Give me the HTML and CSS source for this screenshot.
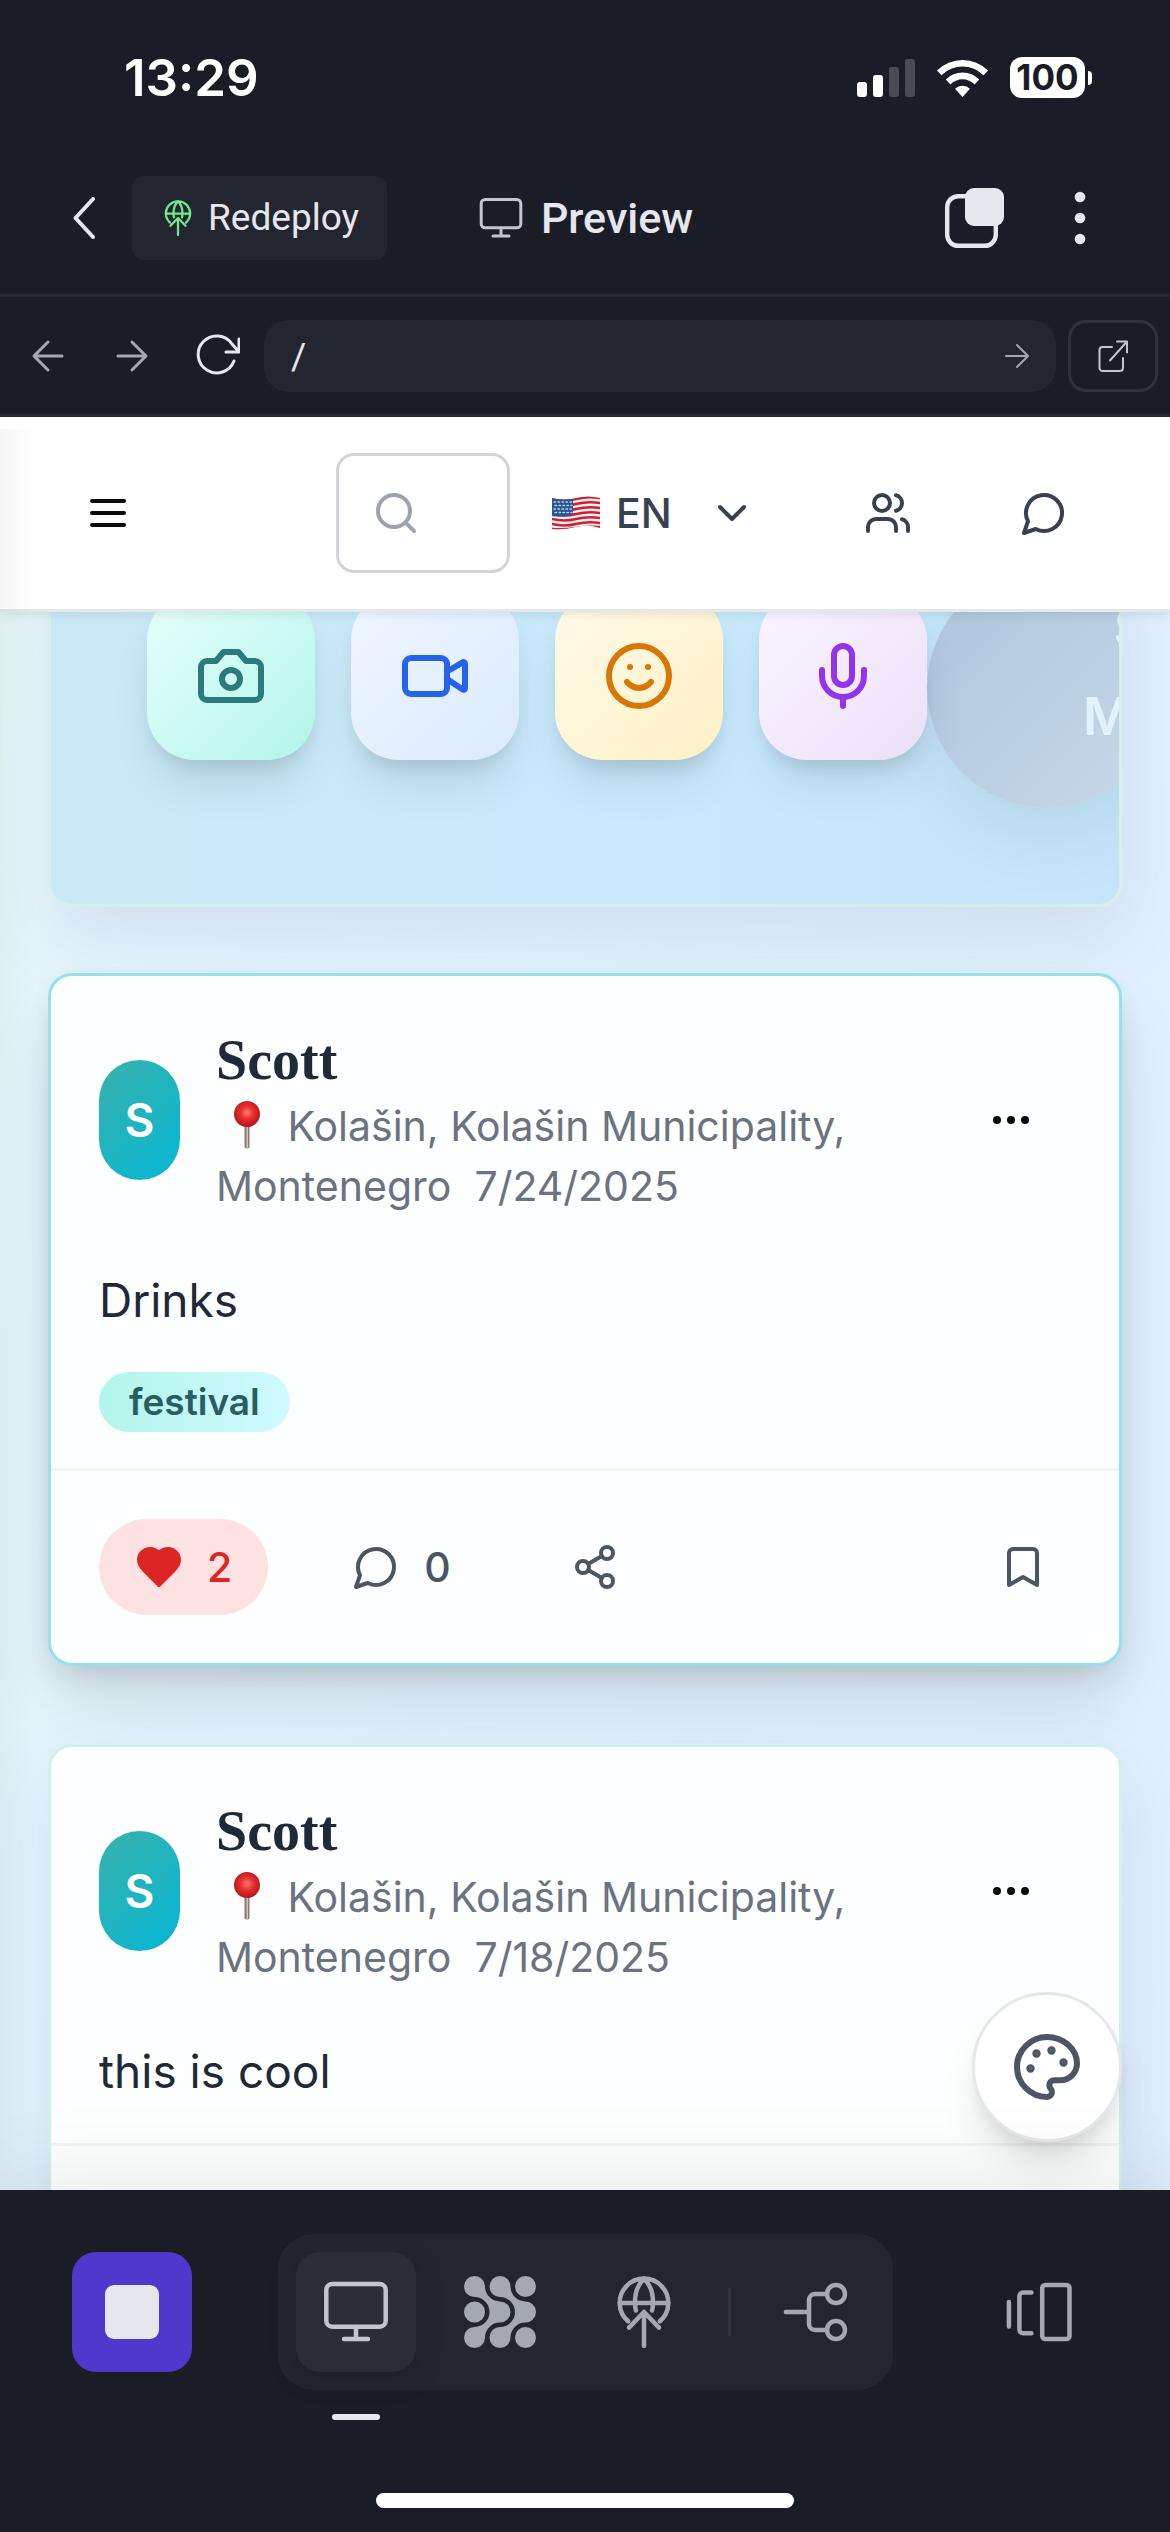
FILE: index.html
```html
<!DOCTYPE html>
<html lang="en">
<head>
<meta charset="utf-8">
<meta name="viewport" content="width=device-width, initial-scale=1">
<title>Preview</title>
<link rel="stylesheet" href="styles.css">
</head>
<body>
<svg class="sprite" aria-hidden="true">
  <symbol id="i-monitor" viewBox="0 0 24 24"><rect x="2.1" y="2.7" width="19.8" height="14.2" rx="2"/><path d="M12 17v4M8 21h8"/></symbol>
  <symbol id="i-deploy" viewBox="0 0 24 24"><path d="M6.7 15.1A8.1 8.1 0 1 1 17.3 15.1M3.8 9h16.4M12 .9C10 2.800 9 6 9 8.800c0 1 .1 1.900.3 2.700M12 .9c2 1.900 3 5.100 3 7.900 0 1-.1 1.900-.3 2.700"/><path d="M7 17.200l5-5.200 5 5.200M12 12v11.300" stroke-linecap="round"/></symbol>
  <symbol id="i-message" viewBox="0 0 24 24"><path d="M7.900 20A9 9 0 1 0 4 16.100L2 22Z"/></symbol>
  <symbol id="i-dots" viewBox="0 0 24 24"><circle cx="12" cy="12" r="1"/><circle cx="19" cy="12" r="1"/><circle cx="5" cy="12" r="1"/></symbol>
  <symbol id="i-pin" viewBox="0 0 57 48"><defs><radialGradient id="ball" cx=".5" cy=".45" r=".55"><stop offset="0" stop-color="#ff7a70"/><stop offset=".45" stop-color="#e8302f"/><stop offset="1" stop-color="#b5151b"/></radialGradient></defs><path d="M27 24h5v22.500q-2.500 2-5 0z" fill="#8d7b73"/><path d="M29 24h1.500v23H29z" fill="#cfc3bc"/><circle cx="29.500" cy="13" r="13" fill="url(#ball)"/></symbol>
</svg>

<header class="status">
  <time class="clock">13:29</time>
  <div class="status-icons">
    <svg width="58" height="38" viewBox="0 0 58 38" aria-label="Signal"><g fill="#fff"><rect y="23" width="10" height="15" rx="3"/><rect x="16" y="16" width="10" height="22" rx="3"/></g><g fill="#484a54"><rect x="32" y="8" width="10" height="30" rx="3"/><rect x="48" width="10" height="38" rx="3"/></g></svg>
    <svg width="51" height="38" viewBox="0 0 51 38" aria-label="Wi-Fi"><path d="M0 11.500A36 36 0 0 1 51 11.500L46.500 16.200A29.800 29.800 0 0 0 4.500 16.200ZM8.800 20.500A23.500 23.500 0 0 1 42.200 20.500L37.600 25.400A17 17 0 0 0 13.400 25.400ZM18 29.800A10.700 10.700 0 0 1 33 29.800L25.500 38Z"/></svg>
    <div class="battery"><span class="battery-level">100</span><span class="battery-cap"></span></div>
  </div>
</header>

<nav class="topbar">
  <div class="topbar-left">
    <button class="back" aria-label="Back"><svg width="22" height="42" viewBox="0 0 22 42"><path d="M20 2L2.500 21L20 40"/></svg></button>
    <button class="redeploy"><svg class="icon-36"><use href="#i-deploy"/></svg>Redeploy</button>
  </div>
  <h1 class="title"><svg class="icon-48 thin"><use href="#i-monitor"/></svg>Preview</h1>
  <div class="topbar-right">
    <button class="bare" aria-label="Windows"><svg width="60" height="60" viewBox="0 0 60 60"><rect x="2.200" y="8.200" width="48.600" height="49.600" rx="11" stroke="#e6e7ed" stroke-width="4.400"/><rect x="20" y="0" width="39" height="38" rx="9" fill="#e6e7ed"/></svg></button>
    <button class="bare" aria-label="More"><svg width="60" height="60" viewBox="0 0 60 60"><g fill="#e6e7ed"><circle cx="30" cy="9" r="5.300"/><circle cx="30" cy="30" r="5.300"/><circle cx="30" cy="51" r="5.300"/></g></svg></button>
  </div>
</nav>

<form class="addressbar">
  <div class="nav-buttons">
    <button type="button" class="nav-btn muted" aria-label="Go back"><svg width="36" height="36" viewBox="0 0 36 36"><path d="M32 18H5M18 4L4 18L18 32"/></svg></button>
    <button type="button" class="nav-btn muted" aria-label="Go forward"><svg width="36" height="36" viewBox="0 0 36 36"><path d="M4 18h27M18 4L32 18L18 32"/></svg></button>
    <button type="button" class="nav-btn" aria-label="Reload"><svg width="48" height="48" viewBox="0 0 48 48"><path d="M47 20H34M47 20V7M47 20L40 12A18.500 18.500 0 1 0 42 29"/></svg></button>
  </div>
  <div class="address">
    <input class="address-input" type="text" value="/" aria-label="Address">
    <button class="go" aria-label="Go"><svg width="24" height="26" viewBox="0 0 24 26"><path d="M1 13h21M12 2L23 13L12 24"/></svg></button>
  </div>
  <button type="button" class="open" aria-label="Open in new tab"><svg width="30" height="32" viewBox="0 0 30 32"><path d="M14 7H4.500A3 3 0 0 0 1.500 10V28A3 3 0 0 0 4.500 31H22A3 3 0 0 0 25 28V18M12 20.500L29 1.500M19 1.500H29V12.500"/></svg></button>
</form>

<main class="app">
  <header class="app-header">
    <button class="icon-btn menu" aria-label="Menu"><svg class="icon-48" viewBox="0 0 24 24"><path d="M4 6h16M4 12h16M4 18h16"/></svg></button>
    <label class="search">
      <svg class="icon-48" viewBox="0 0 24 24"><circle cx="11" cy="11" r="8"/><path d="m21 21-4.300-4.300"/></svg>
      <input class="search-input" type="text" aria-label="Search">
    </label>
    <label class="language">
      <svg width="48" height="34" viewBox="0 0 48 34" aria-hidden="true">
        <defs><clipPath id="wave"><path d="M0 2Q12 5 24 2T48 2V32Q36 28 24 31T0 33Z"/></clipPath></defs>
        <g clip-path="url(#wave)"><rect width="48" height="34" fill="#f4f1f2"/>
          <g fill="none" stroke="#d0202f" stroke-width="2.500"><path d="M0 3Q12 6 24 3T48 2M0 8Q12 11 24 8T48 7M0 13Q12 16 24 13T48 12M0 18Q12 21 24 18T48 17M0 23Q12 26 24 23T48 22M0 28Q12 31 24 28T48 27M0 33Q12 34 24 32T48 31"/></g>
          <path d="M0 0h21v19Q10 22 0 20z" fill="#2a5591"/>
          <g fill="none" stroke="#b9cbe6" stroke-width="1.500" stroke-dasharray="1.500 2.500"><path d="M2 6h18M3 9.500h17M2 13h18M3 16.500h17"/></g></g>
      </svg>
      <select class="language-select" aria-label="Language"><option>EN</option></select>
      <svg class="icon-48 chevron" viewBox="0 0 24 24"><path d="m6 9 6 6 6-6"/></svg>
    </label>
    <button class="icon-btn" aria-label="Friends"><svg class="icon-48" viewBox="0 0 24 24"><path d="M16 21v-2a4 4 0 0 0-4-4H6a4 4 0 0 0-4 4v2"/><circle cx="9" cy="7" r="4"/><path d="M22 21v-2a4 4 0 0 0-3-3.870M16 3.130a4 4 0 0 1 0 7.750"/></svg></button>
    <button class="icon-btn messages" aria-label="Messages"><svg class="icon-48"><use href="#i-message"/></svg></button>
  </header>

  <div class="feed">
    <section class="composer">
      <div class="tiles">
        <button class="tile camera" aria-label="Photo"><svg class="icon-72" viewBox="0 0 24 24"><path d="M14.500 4h-5L7 7H4a2 2 0 0 0-2 2v9a2 2 0 0 0 2 2h16a2 2 0 0 0 2-2V9a2 2 0 0 0-2-2h-3z"/><circle cx="12" cy="13" r="3"/></svg></button>
        <button class="tile video" aria-label="Video"><svg class="icon-72" viewBox="0 0 24 24"><path d="m16 13 5.223 3.482a.5.5 0 0 0 .777-.416V7.870a.5.5 0 0 0-.752-.432L16 10.500"/><rect x="2" y="6" width="14" height="12" rx="2"/></svg></button>
        <button class="tile mood" aria-label="Mood"><svg class="icon-72" viewBox="0 0 24 24"><circle cx="12" cy="12" r="10"/><path d="M8 14s1.500 2 4 2 4-2 4-2M9 9h.01M15 9h.01"/></svg></button>
        <button class="tile voice" aria-label="Voice"><svg class="icon-72" viewBox="0 0 24 24"><path d="M12 2a3 3 0 0 0-3 3v7a3 3 0 0 0 6 0V5a3 3 0 0 0-3-3Z"/><path d="M19 10v2a7 7 0 0 1-14 0v-2M12 19v3"/></svg></button>
      </div>
      <button class="share"><span>Share<br>Moment</span></button>
    </section>

    <article class="post highlighted">
      <header class="post-head">
        <span class="avatar">S</span>
        <div class="byline">
          <h2 class="author">Scott</h2>
          <p class="meta"><svg class="pin"><use href="#i-pin"/></svg> Kolašin, Kolašin Municipality, Montenegro&nbsp; 7/24/2025</p>
        </div>
        <button class="icon-btn options" aria-label="Post options"><svg class="icon-48"><use href="#i-dots"/></svg></button>
      </header>
      <p class="body">Drinks</p>
      <ul class="tags"><li><a class="tag" href="#festival">festival</a></li></ul>
      <footer class="actions">
        <button class="action liked"><svg class="icon-48" viewBox="0 0 24 24"><path d="M19 14c1.490-1.460 3-3.210 3-5.500A5.500 5.500 0 0 0 16.500 3c-1.760 0-3 .5-4.500 2-1.500-1.500-2.740-2-4.500-2A5.500 5.500 0 0 0 2 8.500c0 2.300 1.500 4.050 3 5.500l7 7Z"/></svg>2</button>
        <button class="action"><svg class="icon-48"><use href="#i-message"/></svg>0</button>
        <button class="action" aria-label="Share"><svg class="icon-48" viewBox="0 0 24 24"><circle cx="18" cy="5" r="3"/><circle cx="6" cy="12" r="3"/><circle cx="18" cy="19" r="3"/><path d="m8.590 13.510 6.830 3.980M15.410 6.510l-6.820 3.980"/></svg></button>
        <button class="action save" aria-label="Save"><svg class="icon-48" viewBox="0 0 24 24"><path d="m19 21-7-4-7 4V5a2 2 0 0 1 2-2h10a2 2 0 0 1 2 2v16z"/></svg></button>
      </footer>
    </article>

    <article class="post">
      <header class="post-head">
        <span class="avatar">S</span>
        <div class="byline">
          <h2 class="author">Scott</h2>
          <p class="meta"><svg class="pin"><use href="#i-pin"/></svg> Kolašin, Kolašin Municipality, Montenegro&nbsp; 7/18/2025</p>
        </div>
        <button class="icon-btn options" aria-label="Post options"><svg class="icon-48"><use href="#i-dots"/></svg></button>
      </header>
      <p class="body">this is cool</p>
      <footer class="actions"></footer>
    </article>
  </div>

  <button class="palette" aria-label="Theme"><svg class="icon-72" viewBox="0 0 24 24"><g fill="currentColor" stroke-width="1.800"><circle cx="13.500" cy="6.500" r=".5"/><circle cx="17.500" cy="10.500" r=".5"/><circle cx="8.500" cy="7.500" r=".5"/><circle cx="6.500" cy="12.500" r=".5"/></g><path d="M12 2C6.500 2 2 6.500 2 12s4.500 10 10 10c.926 0 1.648-.746 1.648-1.688 0-.437-.18-.835-.437-1.125-.29-.289-.438-.652-.438-1.125a1.640 1.640 0 0 1 1.668-1.668h1.996c3.051 0 5.555-2.503 5.555-5.554C21.965 6.012 17.461 2 12 2z"/></svg></button>
</main>

<nav class="dock">
  <div class="dock-row">
    <button class="stop" aria-label="Stop"><span class="stop-mark"></span></button>
    <div class="tabs">
      <button class="tab active" aria-label="Preview"><svg class="icon-72 thin"><use href="#i-monitor"/></svg></button>
      <button class="tab" aria-label="Agent"><svg class="icon-72 solid" viewBox="0 0 24 24"><path d="M7 3.500A5 5 0 0 0 12 8.500A3.500 3.500 0 0 1 12 15.500A5 5 0 0 0 7 20.500A3.500 3.500 0 1 1 3.500 17A5 5 0 0 0 3.500 7A3.500 3.500 0 1 1 7 3.500ZM15.500 3.500A5 5 0 0 0 20.500 8.500A3.500 3.500 0 0 1 20.500 15.500A5 5 0 0 0 15.500 20.500A3.500 3.500 0 1 1 12 17A5 5 0 0 0 12 7A3.500 3.500 0 1 1 15.500 3.500Z"/><circle cx="20.500" cy="3.500" r="3.500"/><circle cx="3.500" cy="12" r="3.500"/><circle cx="20.500" cy="20.500" r="3.500"/></svg></button>
      <button class="tab" aria-label="Deploy"><svg class="icon-72 thin"><use href="#i-deploy"/></svg></button>
      <span class="divider"></span>
      <button class="tab" aria-label="Branches"><svg class="icon-72 thin" viewBox="0 0 24 24"><circle cx="19" cy="6" r="3"/><circle cx="19" cy="18" r="3"/><path d="M2.300 12H10M16 6h-4a2 2 0 0 0-2 2v8a2 2 0 0 0 2 2h4"/></svg></button>
    </div>
    <button class="tab" aria-label="Tabs"><svg class="icon-72 thin" viewBox="0 0 24 24"><rect x="13.400" y="3" width="9.100" height="18" rx="1"/><path d="M9.800 5.500H7A1.200 1.200 0 0 0 5.800 6.700V17.900A1.200 1.200 0 0 0 7 19.100H9.800M2.300 8.700V16.800"/></svg></button>
  </div>
  <span class="home-bar"></span>
</nav>
</body>
</html>
```
FILE: styles.css
```css
* { box-sizing: border-box; }

body {
  margin: 0;
  height: 100vh;
  display: flex;
  flex-direction: column;
  overflow: hidden;
  background: #1b1d26;
  color: #e6e7ed;
  font-family: Inter, "Liberation Sans", sans-serif;
}

h1, h2, p, ul { margin: 0; padding: 0; }
ul { list-style: none; }

button, input, select {
  margin: 0;
  padding: 0;
  border: 0;
  background: none;
  color: inherit;
  font: inherit;
}

button {
  display: flex;
  align-items: center;
  justify-content: center;
  flex-shrink: 0;
}

svg {
  display: block;
  flex-shrink: 0;
  fill: none;
  stroke-linecap: round;
  stroke-linejoin: round;
}

.sprite { position: absolute; width: 0; height: 0; }
.icon-36 { width: 36px; height: 36px; stroke: currentColor; stroke-width: 1.5; }
.icon-48 { width: 48px; height: 48px; stroke: currentColor; stroke-width: 2; }
.icon-72 { width: 72px; height: 72px; stroke: currentColor; stroke-width: 2; }
.thin { stroke-width: 1.5; }
.solid { fill: currentColor; stroke: none; }

/* Phone status bar */
.status {
  display: flex;
  align-items: center;
  justify-content: space-between;
  height: 141px;
  padding: 14px 78px 0 124px;
  flex-shrink: 0;
  color: #fff;
}
.clock { font-size: 51px; font-weight: 600; }
.status-icons { display: flex; align-items: center; gap: 22px; }
.status-icons svg { fill: currentColor; }
.battery { display: flex; align-items: center; gap: 3px; }
.battery-level {
  width: 75px;
  height: 41px;
  border-radius: 12px;
  background: #fff;
  color: #1b1d26;
  font-size: 35px;
  font-weight: 700;
  line-height: 41px;
  text-align: center;
}
.battery-cap { width: 4px; height: 14px; border-radius: 0 4px 4px 0; background: #fff; }

/* Workspace bar */
.topbar {
  display: grid;
  grid-template-columns: 1fr auto 1fr;
  align-items: center;
  height: 156px;
  padding: 0 60px;
  flex-shrink: 0;
  border-bottom: 3px solid #272934;
  font-family: Roboto, "Liberation Sans", sans-serif;
}
.topbar-left { display: flex; align-items: center; gap: 24px; }
.back { width: 48px; height: 84px; }
.back svg { stroke: #e6e7ed; stroke-width: 4; }
.redeploy {
  gap: 12px;
  height: 84px;
  padding: 0 28px;
  border-radius: 12px;
  background: #24262f;
  font-size: 37px;
}
.redeploy .icon-36 { color: #6eea8c; }
.title { display: flex; align-items: center; gap: 16px; font-size: 43px; font-weight: 500; }
.title .icon-48 { color: #c2c5ce; }
.topbar-right { display: flex; justify-content: flex-end; gap: 45px; }
.bare { width: 60px; height: 60px; }

/* Address bar */
.addressbar {
  display: flex;
  gap: 12px;
  padding: 23px 12px 22px 6px;
  flex-shrink: 0;
  border-bottom: 3px solid #272934;
  font-family: Roboto, "Liberation Sans", sans-serif;
}
.nav-buttons { display: flex; width: 246px; }
.nav-btn { width: 84px; height: 72px; }
.nav-btn svg, .go svg, .open svg { stroke: currentColor; stroke-width: 3; }
.nav-btn.muted, .go { color: #a3a8b2; }
.address {
  display: flex;
  flex: 1;
  padding: 0 27px;
  border-radius: 24px;
  background: #24262f;
}
.address-input { flex: 1; min-width: 0; height: 72px; font-size: 37px; }
.go { width: 24px; }
.go svg, .open svg { stroke-width: 2; }
.open {
  width: 90px;
  height: 72px;
  border: 3px solid #2f313d;
  border-radius: 18px;
  color: #c2c5ce;
}

/* Previewed app */
.app {
  position: relative;
  display: flex;
  flex-direction: column;
  flex: 1;
  min-height: 0;
  overflow: hidden;
  background: linear-gradient(96deg, #e8fbf6 0%, #e4f5fb 9%, #e0f2fe 60%, #e0effd 100%);
}
.app::before {
  content: "";
  position: absolute;
  inset: 12px auto 0 0;
  width: 36px;
  z-index: 3;
  background: linear-gradient(90deg, rgba(0, 0, 0, 0.035), rgba(0, 0, 0, 0));
  pointer-events: none;
}
.app-header {
  position: relative;
  z-index: 2;
  display: flex;
  align-items: center;
  height: 195px;
  padding: 0 66px 0 48px;
  flex-shrink: 0;
  border-bottom: 3px solid #e5e7eb;
  background: #fff;
  box-shadow: 0 3px 9px rgba(0, 0, 0, 0.08);
  color: #374151;
}
.icon-btn { width: 120px; height: 120px; }
.menu { margin-right: auto; color: #0a0a0a; }
.options { color: #0a0a0a; }
.messages { margin-left: 36px; }
.search {
  display: flex;
  align-items: center;
  width: 174px;
  height: 120px;
  padding: 0 33px;
  border: 3px solid #d1d5db;
  border-radius: 18px;
  color: #9ca3af;
}
.search-input { flex: 1; min-width: 0; height: 60px; color: #374151; font-size: 41px; }
.language {
  display: flex;
  align-items: center;
  width: 204px;
  margin: 0 72px 0 42px;
}
.language-select {
  margin-left: 16px;
  appearance: none;
  font-size: 41px;
  font-weight: 500;
}
.chevron { margin-left: auto; }

.feed {
  flex: 1;
  min-height: 0;
  overflow: hidden;
  padding: 0 48px;
}

.composer {
  display: flex;
  align-items: flex-start;
  margin: -71px 0 66px;
  padding: 24px 96px 96px;
  overflow: hidden;
  border: 3px solid #d5efec;
  border-radius: 24px;
  background: linear-gradient(90deg, #c9e9f6, #c8e9fc 55%, #c5e6fa);
  box-shadow: 0 30px 75px rgba(80, 90, 150, 0.12);
}
.tiles { display: flex; gap: 36px; padding-top: 24px; }
.tile {
  width: 168px;
  height: 168px;
  border-radius: 48px;
  box-shadow: 0 30px 45px -9px rgba(0, 0, 0, 0.1), 0 12px 18px -6px rgba(0, 0, 0, 0.1);
}
.camera { background: linear-gradient(135deg, #e6fffa, #b2f5ea); color: #2c7a7b; }
.video { background: linear-gradient(135deg, #eff6ff, #dbeafe); color: #2563eb; }
.mood { background: linear-gradient(135deg, #fffbeb, #fdf0c4); color: #d97706; }
.voice { position: relative; background: linear-gradient(135deg, #faf5ff, #ebe0f7); color: #9333ea; }
.share {
  justify-content: flex-start;
  width: 240px;
  height: 240px;
  padding: 0 0 30px 156px;
  border-radius: 120px;
  background: linear-gradient(135deg, #abc3db, #c8dae9);
  box-shadow: 0 30px 75px rgba(0, 0, 0, 0.08);
  color: #e3f3fd;
  font-size: 52px;
  font-weight: 600;
  line-height: 88px;
  text-align: center;
}
.tiles { position: relative; z-index: 1; }

.post {
  margin-bottom: 78px;
  border: 3px solid #d5efec;
  border-radius: 24px;
  background: #fdfefe;
  box-shadow: 0 24px 75px rgba(60, 100, 150, 0.12);
  color: #1f2937;
}
.highlighted {
  border-color: #96e0ec;
  box-shadow: 0 36px 66px -6px rgba(0, 0, 0, 0.12), 0 12px 30px -9px rgba(0, 0, 0, 0.14);
}
.post-head { display: flex; align-items: center; padding: 48px 48px 0; }
.avatar {
  display: flex;
  align-items: center;
  justify-content: center;
  width: 81px;
  height: 120px;
  margin-right: 36px;
  flex-shrink: 0;
  border-radius: 41px;
  background: linear-gradient(135deg, #38b2ac, #06b6d4);
  color: #fff;
  font-size: 46px;
  font-weight: 600;
}
.byline { flex: 1; min-width: 0; }
.author {
  font-family: "Liberation Serif", serif;
  font-size: 56px;
  font-weight: 700;
  line-height: 72px;
}
.meta { color: #6b7280; font-size: 41px; line-height: 60px; }
.pin { display: inline-block; width: 60px; height: 48px; vertical-align: -8px; }
.body { padding: 48px 48px 36px; font-size: 46px; line-height: 72px; }
.tags { display: flex; padding: 0 48px 36px; }
.tag {
  display: block;
  height: 60px;
  padding: 0 30px;
  border-radius: 30px;
  background: linear-gradient(90deg, #b2f5ea, #cffafe);
  color: #285e61;
  font-size: 37px;
  font-weight: 600;
  line-height: 60px;
  text-decoration: none;
}
.actions {
  display: flex;
  gap: 48px;
  min-height: 195px;
  padding: 48px;
  border-top: 3px solid #f3f4f6;
  color: #4b5563;
}
.action {
  gap: 24px;
  height: 96px;
  padding: 0 36px;
  border-radius: 48px;
  font-size: 41px;
  font-weight: 500;
}
.liked { background: #fee2e2; color: #dc2626; }
.liked svg { fill: currentColor; }
.save { margin-left: auto; padding: 0 24px; }

.palette {
  position: absolute;
  right: 48px;
  bottom: 48px;
  z-index: 2;
  width: 150px;
  height: 150px;
  border: 3px solid #e5e7eb;
  border-radius: 75px;
  background: #fff;
  box-shadow: 0 30px 45px -9px rgba(0, 0, 0, 0.1), 0 12px 18px -6px rgba(0, 0, 0, 0.1);
  color: #4b5563;
}

/* Bottom dock */
.dock {
  position: relative;
  z-index: 3;
  display: flex;
  flex-direction: column;
  align-items: center;
  justify-content: space-between;
  height: 342px;
  padding: 44px 0 24px;
  flex-shrink: 0;
  background: #1b1d26;
  box-shadow: 0 0 90px rgba(0, 0, 0, 0.1);
}
.dock-row {
  display: flex;
  align-items: center;
  justify-content: space-between;
  width: 100%;
  padding: 0 72px;
}
.stop { width: 120px; height: 120px; border-radius: 24px; background: #5138cc; }
.stop-mark { width: 54px; height: 54px; border-radius: 9px; background: #e6e7ed; }
.tabs {
  display: flex;
  align-items: center;
  gap: 24px;
  padding: 18px;
  border-radius: 36px;
  background: #24262f;
}
.tab {
  position: relative;
  width: 120px;
  height: 120px;
  border-radius: 24px;
  color: #a3a8b2;
}
.active {
  background: #2b2c38;
  box-shadow: 0 6px 24px rgba(20, 18, 30, 0.35);
  color: #c2c5ce;
}
.active::after {
  content: "";
  position: absolute;
  bottom: -48px;
  width: 48px;
  height: 6px;
  border-radius: 3px;
  background: #e6e7ed;
}
.divider { width: 3px; height: 48px; background: #2f313d; }
.home-bar { width: 418px; height: 15px; border-radius: 8px; background: #fff; }
```
